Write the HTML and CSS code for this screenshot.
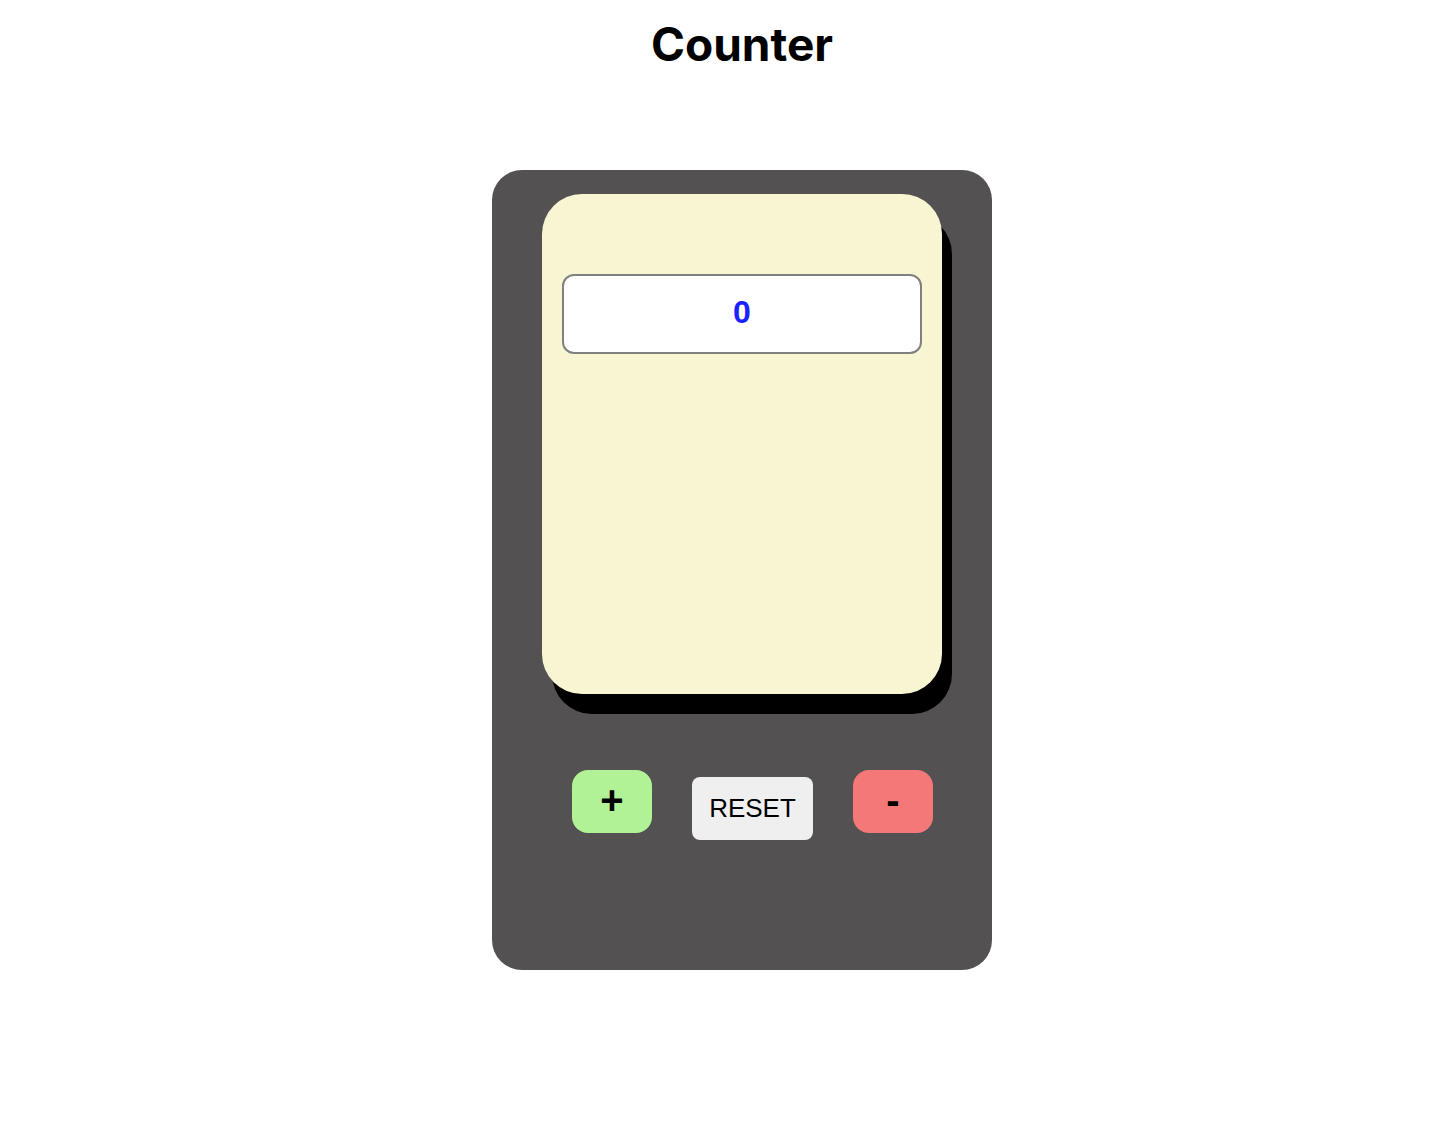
FILE: index.html
```html
<!DOCTYPE html>
<html>
<head>
<meta charset="utf-8">
<link rel="stylesheet" href="styles.css">
</head>
<body>
<div class="page">
  <h1 class="title">Counter</h1>
  <div class="device">
    <div class="screen">
      <div class="display">0</div>
    </div>
    <div class="controls">
      <button class="btn btn-plus">+</button>
      <button class="btn btn-reset">RESET</button>
      <button class="btn btn-minus">-</button>
    </div>
  </div>
</div>
</body>
</html>
```

FILE: styles.css
```css
html, body {
  margin: 0;
  padding: 0;
  background: #ffffff;
}
.page {
  display: flex;
  flex-direction: column;
  align-items: center;
  padding-left: 50px;
}
.title {
  font-family: Inter, "Liberation Sans", sans-serif;
  font-weight: 700;
  font-size: 46px;
  line-height: 1;
  margin: 21px 0 0 0;
}
.device {
  margin-top: 103px;
  width: 500px;
  height: 800px;
  box-sizing: border-box;
  background: #535151;
  border-radius: 30px;
  padding-top: 24px;
  display: flex;
  flex-direction: column;
  align-items: center;
}
.screen {
  width: 400px;
  height: 500px;
  box-sizing: border-box;
  background: #f8f6d2;
  border-radius: 40px;
  box-shadow: 10px 20px 0 #000;
  padding: 80px 20px 0 20px;
}
.display {
  height: 80px;
  box-sizing: border-box;
  background: #fff;
  border: 2px solid #808080;
  border-radius: 12px;
  display: flex;
  align-items: center;
  justify-content: center;
  padding-bottom: 4px;
  font-family: "Liberation Sans", Arial, sans-serif;
  font-weight: 700;
  font-size: 32px;
  color: #1a22ff;
}
.controls {
  margin-top: 76px;
  display: flex;
  align-items: flex-start;
  gap: 40px;
  padding-left: 21px;
}
.btn {
  border: none;
  font-family: "Liberation Sans", Arial, sans-serif;
  color: #000;
  padding: 0;
  cursor: pointer;
}
.btn-plus, .btn-minus {
  width: 80px;
  height: 63px;
  border-radius: 16px;
  font-size: 40px;
  font-weight: 700;
  line-height: 1;
  padding-bottom: 3px;
}
.btn-plus { background: #b2f296; }
.btn-minus { background: #f47878; }
.btn-reset {
  margin-top: 7px;
  width: 121px;
  height: 63px;
  border-radius: 8px;
  background: #efefef;
  font-size: 26px;
}
```
